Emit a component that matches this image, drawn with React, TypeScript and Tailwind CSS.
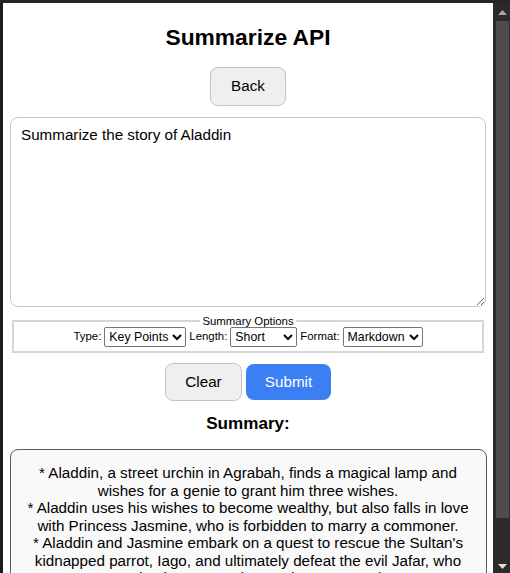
import * as React from 'react'

const summaryLines = [
  '* Aladdin, a street urchin in Agrabah, finds a magical lamp and wishes for a genie to grant him three wishes.',
  '* Aladdin uses his wishes to become wealthy, but also falls in love with Princess Jasmine, who is forbidden to marry a commoner.',
  "* Aladdin and Jasmine embark on a quest to rescue the Sultan's kidnapped parrot, Iago, and ultimately defeat the evil Jafar, who wanted to become Sultan and marry Jasmine.",
]

function Scrollbar() {
  return (
    <div className="flex w-[17px] shrink-0 flex-col items-center bg-[#2b2b2b] pl-[1px]">
      <div className="flex h-[18px] shrink-0 items-center justify-center">
        <svg width="9" height="5" viewBox="0 0 9 5">
          <polygon points="0,5 4.5,0 9,5" fill="#a8a8a8" />
        </svg>
      </div>
      <div className="h-[497px] w-[13px] shrink-0 bg-[#4d4d4d]" />
      <div className="flex flex-1 items-end justify-center pb-[4px]">
        <svg width="9" height="5" viewBox="0 0 9 5">
          <polygon points="0,0 4.5,5 9,0" fill="#e0e0e0" />
        </svg>
      </div>
    </div>
  )
}

export default function App() {
  const [prompt, setPrompt] = React.useState('Summarize the story of Aladdin')

  return (
    <div className="flex h-[573px] w-[510px] flex-col overflow-hidden bg-[#1f1f1f] font-['Liberation_Sans',Arial,sans-serif] text-black">
      <div className="h-[3px] shrink-0 bg-[#262626]" />
      <div className="flex min-h-0 flex-1">
        <div className="w-[3px] shrink-0 bg-[#1c1c1c]" />
        <div className="flex min-w-0 flex-1 flex-col items-center overflow-hidden bg-white px-[7px] pt-[21px]">
          <h1 className="shrink-0 text-[22.8px] font-bold leading-[27px]">Summarize API</h1>

          <button className="mt-[16px] h-[39px] w-[76px] shrink-0 rounded-[8px] border border-[#c4c4c4] bg-[#efefef] text-[15.2px]">
            Back
          </button>

          <textarea
            value={prompt}
            onChange={e => setPrompt(e.target.value)}
            className="mt-[11px] h-[190px] w-full shrink-0 resize-y rounded-[8px] border border-[#c8c8c8] px-[10px] py-[8px] text-[15.2px] leading-[18px] outline-none"
          />

          <fieldset className="mx-[2px] mt-[8px] w-[472px] shrink-0 border-2 border-[#d6d6d6] px-[10px] pb-[4px] pt-0 text-[11.4px]">
            <legend className="mx-auto px-[2px] text-[11.4px] leading-[12px]">Summary Options</legend>
            <div className="flex items-center justify-center gap-[3px]">
              <label>Type:</label>
              <select className="h-[20px] w-[82px] rounded-[2px] border border-[#767676] bg-white pl-0 text-[12.35px]">
                <option>Key Points</option>
                <option>TL;DR</option>
                <option>Teaser</option>
                <option>Headline</option>
              </select>
              <label>Length:</label>
              <select className="h-[20px] w-[67px] rounded-[2px] border border-[#767676] bg-white pl-0 text-[12.35px]">
                <option>Short</option>
                <option>Medium</option>
                <option>Long</option>
              </select>
              <label>Format:</label>
              <select className="h-[20px] w-[80px] rounded-[2px] border border-[#767676] bg-white pl-0 text-[12.35px]">
                <option>Markdown</option>
                <option>Plain Text</option>
              </select>
            </div>
          </fieldset>

          <div className="mt-[10px] flex shrink-0 items-center gap-[4px]">
            <button
              onClick={() => setPrompt('')}
              className="h-[38px] w-[77px] rounded-[8px] border border-[#c4c4c4] bg-[#efefef] text-[15.2px]"
            >
              Clear
            </button>
            <button className="h-[36px] w-[85px] rounded-[8px] bg-[#3b7ff3] text-[15.2px] text-white">
              Submit
            </button>
          </div>

          <h3 className="mt-[13px] shrink-0 text-[17.1px] font-bold leading-[20px]">Summary:</h3>

          <div className="mt-[15px] w-[477px] shrink-0 rounded-[8px] border border-[#5c5c5c] bg-[#f9f9f9] px-[14px] pt-[14px] pb-[15px] text-center text-[15.2px] leading-[17.5px]">
            {summaryLines.map((line, i) => (
              <p key={i}>{line}</p>
            ))}
          </div>
        </div>
        <Scrollbar />
      </div>
    </div>
  )
}
